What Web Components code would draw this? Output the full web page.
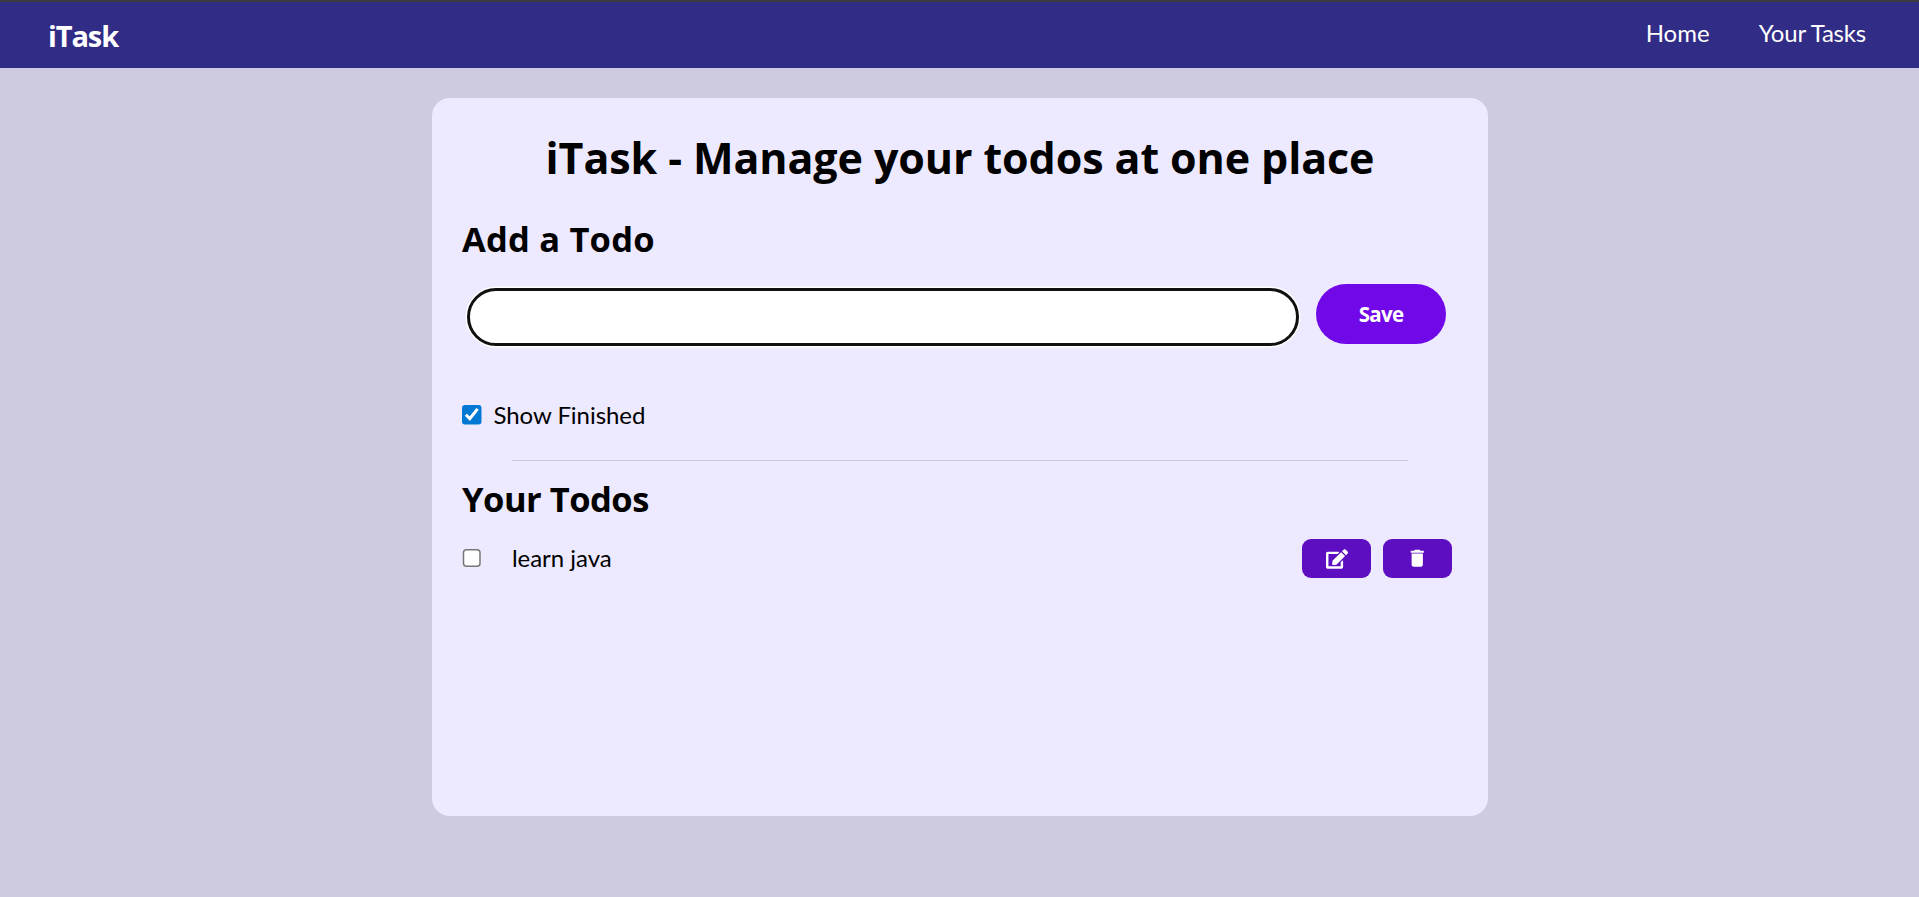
<!DOCTYPE html>
<html><head><meta charset="utf-8"><style>
html,body{margin:0;padding:0;height:897px;overflow:hidden;background:#cecae0}
body{font-family:Lato,"Open Sans",sans-serif;color:#000}
</style></head><body>
<template id="t-nav"><style>
:host{display:flex;box-sizing:border-box;height:68px;background:#312c85;border-top:2px solid #3c3c3c;color:#fff;justify-content:space-between;align-items:center;padding:0 53px 0 48px}
.logo{font:700 29px "Open Sans",sans-serif;letter-spacing:-1.1px}
nav{display:flex;gap:49px;font-size:24px;padding-bottom:5px}
nav span+span{letter-spacing:-.2px}
</style><div class="logo">iTask</div><nav><span>Home</span><span>Your Tasks</span></nav></template>

<template id="t-card"><style>
:host{display:block;box-sizing:border-box;width:1056px;height:718px;margin:30px 0 0 432px;background:#ede9fe;border-radius:18px;padding:30px}
</style><slot></slot></template>

<template id="t-form"><style>
:host{display:block}
h1{margin:0;text-align:center;font:700 43px/60px "Open Sans",sans-serif;letter-spacing:-.1px}
h2{margin:27px 0 0;font:700 34.5px/48px "Open Sans",sans-serif;letter-spacing:.2px}
.row{display:flex;align-items:flex-start;margin:21px 0 0 5px}
input.text{box-sizing:border-box;width:832px;height:58px;margin:4px 0 0;border:3px solid #101010;border-radius:29px;background:#fff;box-shadow:0 0 0 1.5px #fff;outline:none;padding:0 16px}
button{box-sizing:border-box;width:130px;height:60px;margin-left:17px;border:0;border-radius:30px;background:#7008e7;color:#fff;font:700 20.5px "Open Sans",sans-serif;letter-spacing:-.7px;padding:0}
label{display:flex;align-items:center;margin-top:51px;font-size:24px;line-height:36px;letter-spacing:-.05px}
input.c{width:13px;height:13px;margin:0 8px 0 0;zoom:1.5;accent-color:#0078d4}
hr{width:896px;height:1px;border:0;background:#c9c5dc;margin:27px auto 0}
</style>
<h1>iTask - Manage your todos at one place</h1>
<h2>Add a Todo</h2>
<div class="row"><input class="text" type="text" aria-label="Todo"><button>Save</button></div>
<label><input class="c" type="checkbox" checked>Show Finished</label>
<hr></template>

<template id="t-item"><style>
:host{display:flex;align-items:center;justify-content:space-between;margin-top:16px;width:990px}
.l{display:flex;align-items:center;font-size:24px;letter-spacing:-.03px}
.l span{padding-bottom:2px}
input{width:13px;height:13px;margin:0 20.3px 0 0;zoom:1.5}
.b{display:flex;gap:12px}
button{width:69px;height:39px;border:0;border-radius:9px;background:#5d0ec0;color:#fff;padding:0;display:flex;align-items:center;justify-content:center}
svg{fill:#fff;display:block}
</style><div class="l"><input type="checkbox"><span><slot></slot></span></div>
<div class="b"><button aria-label="Edit"><svg width="22" height="22" viewBox="0 0 576 512"><path d="M402.6 83.2l90.2 90.2c3.8 3.8 3.8 10 0 13.8L274.4 405.6l-92.8 10.3c-12.4 1.4-22.9-9.1-21.5-21.5l10.3-92.8L388.8 83.2c3.8-3.8 10-3.8 13.8 0zm162-22.9l-48.8-48.8c-15.2-15.2-39.9-15.2-55.2 0l-35.4 35.4c-3.8 3.8-3.8 10 0 13.8l90.2 90.2c3.8 3.8 10 3.8 13.8 0l35.4-35.4c15.2-15.3 15.2-40 0-55.2zM384 346.2V448H64V128h229.8c3.2 0 6.2-1.3 8.5-3.5l40-40c7.6-7.6 2.2-20.5-8.5-20.5H48C21.5 64 0 85.5 0 112v352c0 26.5 21.5 48 48 48h352c26.5 0 48-21.5 48-48V306.2c0-10.7-12.9-16-20.5-8.5l-40 40c-2.2 2.3-3.5 5.3-3.5 8.5z"/></svg></button>
<button aria-label="Delete"><svg width="22.5" height="22.5" viewBox="0 0 24 24"><path d="M6 19c0 1.1.9 2 2 2h8c1.1 0 2-.9 2-2V7H6v12zM19 4h-3.5l-1-1h-5l-1 1H5v2h14V4z"/></svg></button></div></template>

<template id="t-list"><style>
:host{display:block}
h2{margin:14px 0 0;font:700 34.5px/48px "Open Sans",sans-serif;letter-spacing:-.5px}
</style><h2>Your Todos</h2><slot></slot></template>

<app-nav></app-nav>
<app-card>
<todo-form></todo-form>
<todo-list><todo-item>learn java</todo-item></todo-list>
</app-card>
<script>
for(const [n,t] of [['app-nav','t-nav'],['app-card','t-card'],['todo-form','t-form'],['todo-item','t-item'],['todo-list','t-list']]){
customElements.define(n,class extends HTMLElement{constructor(){super();this.attachShadow({mode:'open'}).appendChild(document.getElementById(t).content.cloneNode(true));}});
}
</script>
</body></html>
